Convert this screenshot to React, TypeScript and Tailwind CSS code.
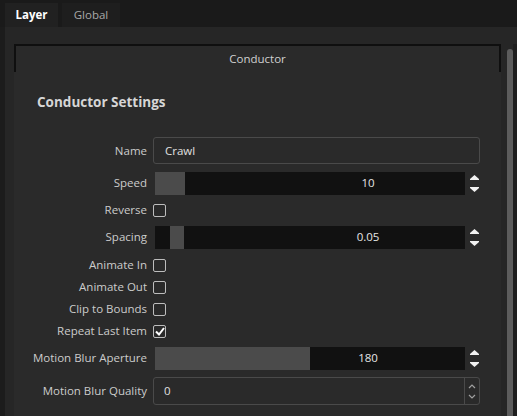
import React from 'react';

const font = { fontFamily: '"Open Sans", "Noto Sans", "Liberation Sans", sans-serif' };

const Label: React.FC<{ text: string }> = ({ text }) => (
  <div className="w-[133px] shrink-0 text-right text-[11.5px] text-[#cccccc]">{text}</div>
);

const Spin: React.FC = () => (
  <div className="flex flex-col items-center justify-center gap-[7px] w-[15px] ml-[2px]">
    <svg width="9" height="5" viewBox="0 0 9 5"><path d="M4.5 0 L9 4 L0 4 Z" fill="#f2f2f2" /><rect x="0" y="4" width="9" height="1" fill="#f2f2f2" /></svg>
    <svg width="9" height="5" viewBox="0 0 9 5"><rect x="0" y="0" width="9" height="1" fill="#f2f2f2" /><path d="M0 1 L9 1 L4.5 5 Z" fill="#f2f2f2" /></svg>
  </div>
);

// slider: from/to are the filled part of the bar, in px
const Slider: React.FC<{ value: string; from: number; to: number }> = ({ value, from, to }) => (
  <div className="flex items-center h-[24px] ml-[2px]">
    <div className="relative w-[310px] h-[23px] bg-[#111111]">
      <div
        className="absolute top-0 bottom-0 bg-[#4b4b4b]"
        style={{ left: from, width: to - from }}
      />
      <div className="relative h-full flex items-center justify-center pl-[116px] text-[11.5px] text-[#e6e6e6]">
        {value}
      </div>
    </div>
    <Spin />
  </div>
);

const Check: React.FC<{ checked?: boolean }> = ({ checked }) => (
  <div className="w-[13px] h-[13px] border-[1.5px] border-[#bdbdbd] rounded-[2px] flex items-center justify-center">
    {checked && (
      <svg width="10" height="9" viewBox="0 0 10 9">
        <path d="M1 4.5 L4 7.5 L9 1" stroke="#ffffff" strokeWidth="2" fill="none" />
      </svg>
    )}
  </div>
);

const Row: React.FC<{ label: string; h: string; children: React.ReactNode; className?: string }> = ({ label, h, children, className }) => (
  <div className={`flex items-center gap-[6px] ${h} ${className ?? ''}`}>
    <Label text={label} />
    {children}
  </div>
);

export default function App() {
  return (
    <div className="w-[517px] h-[416px] overflow-hidden bg-[#1c1c1c] flex flex-col" style={font}>
      {/* tabs */}
      <div className="h-[27px] shrink-0 flex items-end pl-[5px] gap-[4px] bg-[#1a1a1a]">
        <div className="w-[53px] h-[24px] bg-[#212121] flex items-center justify-center text-[11.5px] font-bold text-white">Layer</div>
        <div className="w-[58px] h-[24px] bg-[#1e1e1e] flex items-center justify-center text-[11.5px] text-[#a8a8a8]">Global</div>
      </div>

      <div className="flex-1 flex pl-[5px]">
        <div className="flex-1 flex bg-[#262626] pl-[9px] pt-[17px]">
          {/* group box */}
          <div className="w-[487px] bg-[#2a2a2a] flex flex-col">
            <div className="h-[28px] shrink-0 border-t-[2px] border-x-[2px] border-[#0f0f0f] flex items-center justify-center text-[11.5px] text-[#d0d0d0]">
              Conductor
            </div>
            <div className="pl-[23px] pt-[20px] leading-[20px] text-[13.5px] font-bold text-[#d6d6d6]">Conductor Settings</div>
            <div className="flex flex-col pt-[25px]">
              <Row label="Name" h="h-[27px]">
                <div className="w-[327px] h-[27px] border border-[#4a4a4a] rounded-[3px] flex items-center pl-[11px] text-[11.5px] text-[#e0e0e0]">Crawl</div>
              </Row>
              <Row label="Speed" h="h-[24px]" className="mt-[7px]">
                <Slider value="10" from={0} to={30} />
              </Row>
              <Row label="Reverse" h="h-[30px]">
                <Check />
              </Row>
              <Row label="Spacing" h="h-[24px]">
                <Slider value="0.05" from={15} to={29} />
              </Row>
              <Row label="Animate In" h="h-[22px]" className="mt-[5px]">
                <Check />
              </Row>
              <Row label="Animate Out" h="h-[22px]">
                <Check />
              </Row>
              <Row label="Clip to Bounds" h="h-[22px]">
                <Check />
              </Row>
              <Row label="Repeat Last Item" h="h-[22px]">
                <Check checked />
              </Row>
              <Row label="Motion Blur Aperture" h="h-[24px]" className="mt-[4px]">
                <Slider value="180" from={0} to={155} />
              </Row>
              <Row label="Motion Blur Quality" h="h-[28px]" className="mt-[7px]">
                <div className="w-[327px] h-[28px] border border-[#4a4a4a] rounded-[3px] flex items-stretch text-[11.5px] text-[#e0e0e0]">
                  <div className="flex-1 flex items-center pl-[10px]">0</div>
                  <div className="w-[15px] border-l border-[#4a4a4a] flex flex-col items-center justify-center gap-[5px]">
                    <svg width="8" height="5" viewBox="0 0 8 5"><path d="M1 4 L4 1 L7 4" stroke="#a0a0a0" strokeWidth="1.2" fill="none" /></svg>
                    <svg width="8" height="5" viewBox="0 0 8 5"><path d="M1 1 L4 4 L7 1" stroke="#a0a0a0" strokeWidth="1.2" fill="none" /></svg>
                  </div>
                </div>
              </Row>
            </div>
          </div>
          {/* scrollbar */}
          <div className="w-[6px] ml-[6px] mt-[5px] bg-[#5c5c5c] rounded-t-[3px]" />
          <div className="w-[4px] bg-[#1e1e1e]" />
        </div>
      </div>
    </div>
  );
}
